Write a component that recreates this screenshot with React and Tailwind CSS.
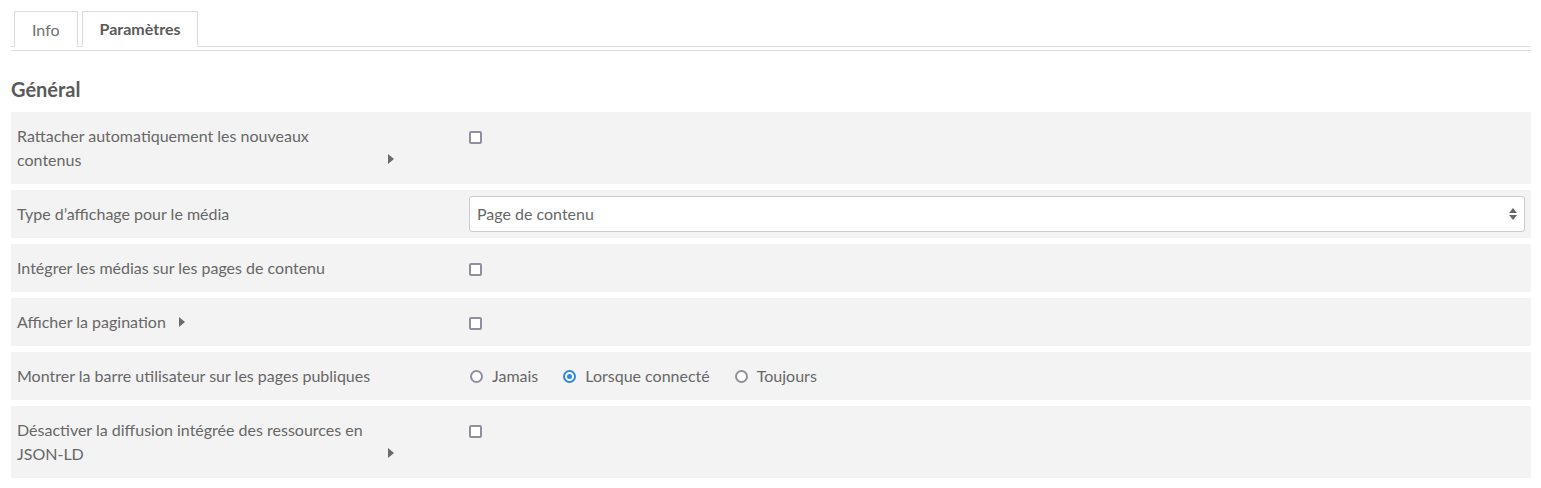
import React from "react";

const Arrow = ({ className = "" }) => (
  <svg width="6" height="10" viewBox="0 0 6 10" className={className}>
    <path d="M0 0 L6 5 L0 10 Z" fill="#6b6b6b" />
  </svg>
);

const Checkbox = () => (
  <span className="mt-[7px] block w-[13px] h-[13px] rounded-[2px] border-2 border-[#8f8f9d] bg-white"></span>
);

const Radio = ({ checked }) =>
  checked ? (
    <span className="flex items-center justify-center w-[13px] h-[13px] rounded-full border-2 border-[#2b87e3] bg-white">
      <span className="w-[5px] h-[5px] rounded-full bg-[#2b87e3]"></span>
    </span>
  ) : (
    <span className="block w-[13px] h-[13px] rounded-full border-2 border-[#8f8f9d] bg-white"></span>
  );

function Row({ label, arrow, wrapArrow, children, center }) {
  return (
    <div className="flex bg-[#f3f3f3] p-[6px] mb-[6px]">
      <div className="w-[452px] shrink-0 py-[6px]">
        <span className="inline-block max-w-[358px] align-bottom">{label}</span>
        {arrow && <Arrow className={"inline-block align-middle " + (wrapArrow ? "ml-[13px] mb-[6px]" : "ml-[13px] mb-[3px]")} />}
      </div>
      <div className={"flex-1 " + (center ? "flex items-center" : "py-[6px]")}>{children}</div>
    </div>
  );
}

export default function App() {
  return (
    <div className="bg-white min-h-[488px] pl-[11px] pr-[10px] pt-[11px] text-[16px] leading-[24px] text-[#676767] font-['Lato',_'Open_Sans',_sans-serif]">
      <div className="flex pl-[3px] gap-[4px] border-b border-[#dddddd] h-[36px]">
        <div className="h-[36px] px-[17px] flex items-center border border-[#dddddd] border-b-0 bg-white text-[#707070]">
          Info
        </div>
        <div className="h-[36px] px-[17px] flex items-center border border-[#dddddd] border-b-white bg-white font-bold text-[#5a5a5a]">
          Paramètres
        </div>
      </div>
      <div className="mt-[3px] border-t border-[#dddddd]"></div>

      <h3 className="mt-[25px] mb-[10px] text-[20px] leading-[26px] font-bold text-[#5a5a5a]">Général</h3>

      <Row label="Rattacher automatiquement les nouveaux contenus" arrow wrapArrow>
        <Checkbox />
      </Row>
      <Row label="Type d’affichage pour le média" center>
        <div className="flex items-center justify-between w-full h-[36px] bg-white border border-[#cccccc] rounded-[3px] pl-[7px] pr-[7px]">
          <span>Page de contenu</span>
          <svg width="8" height="12" viewBox="0 0 8 12">
            <path d="M4 0 L8 5 L0 5 Z" fill="#666" />
            <path d="M0 7 L8 7 L4 12 Z" fill="#666" />
          </svg>
        </div>
      </Row>
      <Row label="Intégrer les médias sur les pages de contenu">
        <Checkbox />
      </Row>
      <Row label="Afficher la pagination" arrow>
        <Checkbox />
      </Row>
      <Row label="Montrer la barre utilisateur sur les pages publiques">
        <div className="flex items-center gap-[25px] pl-[1px]">
          <label className="flex items-center gap-[9px]">
            <Radio />
            <span>Jamais</span>
          </label>
          <label className="flex items-center gap-[9px]">
            <Radio checked />
            <span>Lorsque connecté</span>
          </label>
          <label className="flex items-center gap-[9px]">
            <Radio />
            <span>Toujours</span>
          </label>
        </div>
      </Row>
      <Row label="Désactiver la diffusion intégrée des ressources en JSON-LD" arrow wrapArrow>
        <Checkbox />
      </Row>
    </div>
  );
}
